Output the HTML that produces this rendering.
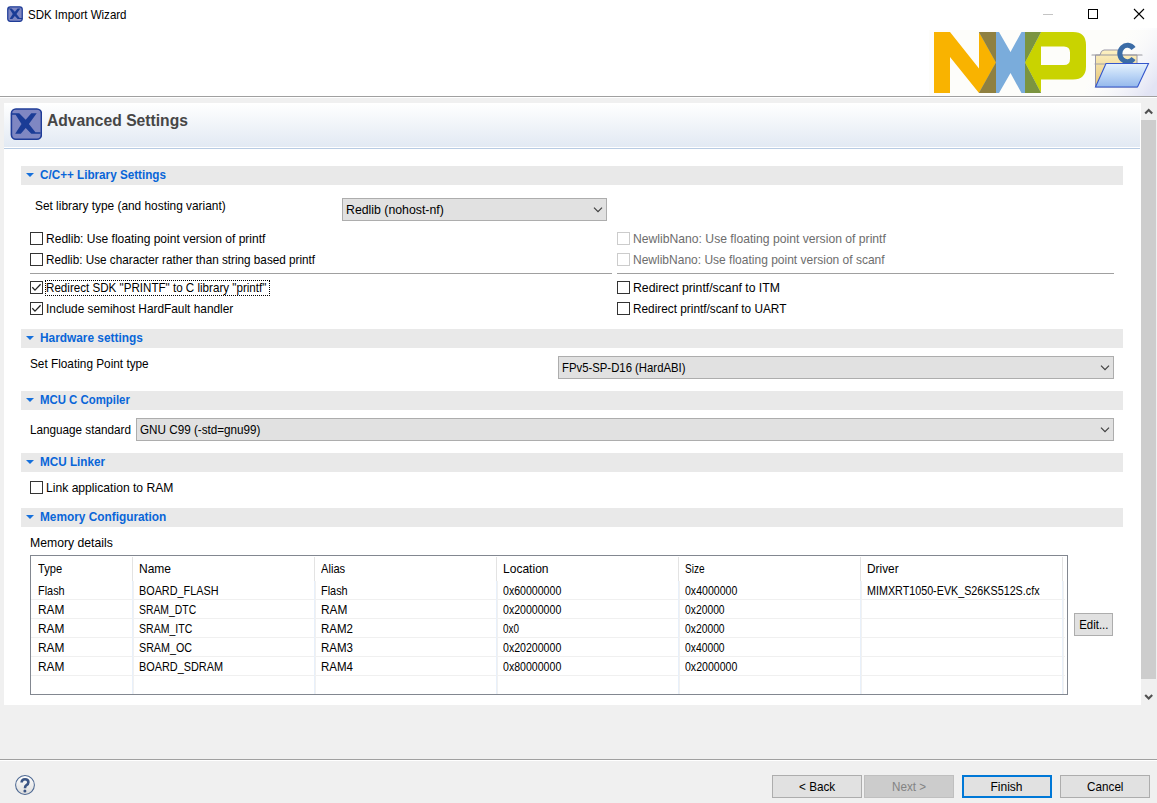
<!DOCTYPE html>
<html><head><meta charset="utf-8">
<style>
*{margin:0;padding:0;box-sizing:border-box}
html,body{width:1157px;height:803px;overflow:hidden;background:#f0f0f0;font-family:"Liberation Sans",sans-serif;font-size:12.4px;color:#000}
.a{position:absolute}
.t{position:absolute;white-space:nowrap;line-height:14px;height:14px}
.b{font-weight:bold}
.cb{position:absolute;width:13px;height:13px;border:1px solid #333;background:#fff}
.cb.dis{border-color:#cccccc}
.cb svg{position:absolute;left:0;top:0}
.dis-t{color:#6d6d6d}
.bar{position:absolute;left:21px;width:1102px;height:19px;background:#e9e9e9}
.bar .tri{position:absolute;left:5px;top:7px;width:0;height:0;border-left:4px solid transparent;border-right:4px solid transparent;border-top:4.4px solid #1570dc}
.bar .t{left:19px;color:#0865d8;font-weight:bold}
.combo{position:absolute;height:23px;border:1px solid #adadad;background:#e1e1e1}
.combo .t{left:3px;top:4px}
.combo svg{position:absolute;top:8px}
.sep{position:absolute;height:1px;background:#a0a0a0}
.btn{position:absolute;height:23px;border:1px solid #adadad;background:#e1e1e1;text-align:center;line-height:21px;padding-top:1px}
.bl{display:inline-block;transform-origin:50% 50%}
.vl{position:absolute;width:1px}
.hl{position:absolute;height:1px;background:#f0f0f0}
</style></head><body>
<!-- title bar & banner -->
<div class="a" style="left:0;top:0;width:1157px;height:96px;background:#fff"></div>
<svg class="a" style="left:7px;top:6px" width="16" height="16" viewBox="0 0 32 32">
<rect x="1.5" y="1.5" width="29" height="29" rx="5" fill="#7f87c2" stroke="#1f3c98" stroke-width="2.5"/>
<path d="M2,5.2 H9.2 L15.7,11.7 L21.3,5.2 H26.7 L18.9,15.9 L25.4,24.2 H30.5 V25.8 H21.3 L15.7,20 L10.8,25.8 H5.2 L11.5,15.9 L5.6,6.7 H2 Z" fill="#1a3c96"/>
</svg>
<div class="t" style="transform:scaleX(0.9292);transform-origin:0 0;left:28px;top:8px">SDK Import Wizard</div>
<!-- window controls -->
<div class="a" style="left:1043px;top:14px;width:10px;height:1px;background:#c4c4c4"></div>
<div class="a" style="left:1088px;top:9px;width:10px;height:10px;border:1px solid #000"></div>
<svg class="a" style="left:1133px;top:8px" width="12" height="12" viewBox="0 0 12 12"><path d="M1 1 L11 11 M11 1 L1 11" stroke="#000" stroke-width="1.1"/></svg>
<!-- NXP logo -->
<svg class="a" style="left:0;top:0" width="1157" height="96" viewBox="0 0 1157 96">
<rect x="929" y="30" width="228" height="66" fill="#fdfdfa"/>
<polygon points="934,32 950,32 979,68.5 979,32 996,32 996,93 979,93 950,57 950,93 934,93" fill="#f9b300"/>
<polygon points="979,32 999,32 1010.5,52 1021.5,32 1041,32 1025,62.5 1041,93 1021.5,93 1010.5,73 999,93 979,93 996,62.5" fill="#7aacdb"/>
<path d="M1041,32 H1073 Q1086,32 1086,45 V66.5 Q1086,79.5 1073,79.5 H1041 V93 L1025,62.5 Z M1041,46.5 V65 H1064 Q1070,65 1070,59 V52.5 Q1070,46.5 1064,46.5 Z" fill="#c9d300" fill-rule="evenodd"/>
<polygon points="979,32 996,32 996,93 979,93 996,62.5" fill="#8f8040"/>
<polygon points="1025,32 1041,32 1025,62.5 1041,93 1025,93" fill="#7b9440"/>
</svg>
<!-- folder icon -->
<svg class="a" style="left:1085px;top:28px" width="72" height="68" viewBox="0 0 72 68">
<defs>
<linearGradient id="bgl" x1="0" y1="0" x2="1" y2="0.8"><stop offset="0.35" stop-color="#ffffff" stop-opacity="0"/><stop offset="1" stop-color="#e2e4f4"/></linearGradient>
<linearGradient id="fb" x1="0" y1="0" x2="0" y2="1"><stop offset="0" stop-color="#fdf2c4"/><stop offset="1" stop-color="#e6c474"/></linearGradient>
<linearGradient id="ff" x1="0" y1="0" x2="0" y2="1"><stop offset="0" stop-color="#e6f2fd"/><stop offset="0.5" stop-color="#bcd6f6"/><stop offset="1" stop-color="#94b8ec"/></linearGradient>
</defs>
<rect x="0" y="0" width="72" height="68" fill="url(#bgl)"/>
<path d="M10.5,59 V27 H15 Q16,22 19,22 H33 V27 H52 V59 Z" fill="url(#fb)" stroke="#9a98a8" stroke-width="1"/>
<path d="M7,27 H57" stroke="#9a9aa0" stroke-width="1.2" stroke-linecap="round"/>
<path d="M48.5,20.5 A7.6,8.2 0 1 0 48.5,30.5" fill="none" stroke="#3b6ca6" stroke-width="5"/>
<path d="M10,36 H58" stroke="#a0a0a8" stroke-width="1" stroke-linecap="round"/>
<polygon points="21,35.5 63.5,35.5 52.5,59 10.5,59" fill="url(#ff)" stroke="#3456cc" stroke-width="1.1"/>
</svg>
<div class="sep" style="left:0;top:96px;width:1157px"></div><div class="a" style="left:0;top:97px;width:1157px;height:1px;background:#fff"></div>

<!-- content panel -->
<div class="a" style="left:4px;top:103px;width:1137px;height:602px;background:#fff"></div>
<div class="a" style="left:4px;top:103px;width:1136px;height:44px;background:linear-gradient(#ffffff,#e2e9f3)"></div>
<div class="a" style="left:4px;top:148px;width:1136px;height:1px;background:#b7cbe3"></div>
<svg class="a" style="left:10px;top:108px" width="32" height="32" viewBox="0 0 32 32">
<rect x="1.4" y="1" width="30" height="30.2" rx="4.5" fill="#7f87c2" stroke="#1f3c98" stroke-width="1.6"/>
<path d="M2,5.2 H9.2 L15.7,11.7 L21.3,5.2 H26.7 L18.9,15.9 L25.4,24.2 H30.5 V25.8 H21.3 L15.7,20 L10.8,25.8 H5.2 L11.5,15.9 L5.6,6.7 H2 Z" fill="#1a3c96"/>
</svg>
<div class="t b" style="transform:scaleX(0.985);transform-origin:0 0;left:47px;top:112px;font-size:15.9px;line-height:18px;height:18px;color:#464646">Advanced Settings</div>

<!-- scrollbar -->
<div class="a" style="left:1141px;top:103px;width:16px;height:602px;background:#f0f0f0"></div>
<div class="a" style="left:1141px;top:120px;width:15px;height:559px;background:#cdcdcd"></div>
<svg class="a" style="left:1141px;top:106px" width="16" height="12" viewBox="0 0 16 12"><path d="M4.2 7.5 L7.7 4 L11.2 7.5" fill="none" stroke="#505050" stroke-width="2.1"/></svg>
<svg class="a" style="left:1141px;top:692px" width="16" height="12" viewBox="0 0 16 12"><path d="M4.2 3 L7.7 6.5 L11.2 3" fill="none" stroke="#505050" stroke-width="2.1"/></svg>

<!-- C/C++ Library Settings -->
<div class="bar" style="top:166px"><div class="tri"></div><div class="t" style="transform:scaleX(0.9432);transform-origin:0 0;top:2px">C/C++ Library Settings</div></div>
<div class="t" style="transform:scaleX(0.9578);transform-origin:0 0;left:35px;top:199px">Set library type (and hosting variant)</div>
<div class="combo" style="left:342px;top:198px;width:265px"><div class="t" style="transform:scaleX(0.9928);transform-origin:0 0;">Redlib (nohost-nf)</div>
<svg style="left:250px" width="10" height="6" viewBox="0 0 10 6"><path d="M1 0.6 L5 4.6 L9 0.6" fill="none" stroke="#404040" stroke-width="1.2"/></svg></div>

<div class="cb" style="left:30px;top:232px"></div><div class="t" style="transform:scaleX(0.9711);transform-origin:0 0;left:46px;top:232px">Redlib: Use floating point version of printf</div>
<div class="cb" style="left:30px;top:253px"></div><div class="t" style="transform:scaleX(0.9461);transform-origin:0 0;left:46px;top:253px">Redlib: Use character rather than string based printf</div>
<div class="sep" style="left:30px;top:273px;width:582px"></div>
<div class="cb" style="left:30px;top:281px"><svg width="11" height="11" viewBox="0 0 11 11"><path d="M1.3 5.2 L4 8.1 L9.6 2.3" fill="none" stroke="#222" stroke-width="1.3"/></svg></div>
<div class="t" style="transform:scaleX(0.9370);transform-origin:0 0;left:46px;top:281px;">Redirect SDK "PRINTF" to C library "printf"</div>
<div class="a" style="left:45px;top:280px;width:225px;height:16px;border:1px dotted #000"></div>
<div class="cb" style="left:30px;top:302px"><svg width="11" height="11" viewBox="0 0 11 11"><path d="M1.3 5.2 L4 8.1 L9.6 2.3" fill="none" stroke="#222" stroke-width="1.3"/></svg></div>
<div class="t" style="transform:scaleX(0.9574);transform-origin:0 0;left:46px;top:302px;">Include semihost HardFault handler</div>

<div class="cb dis" style="left:617px;top:232px"></div><div class="t dis-t" style="transform:scaleX(0.9817);transform-origin:0 0;left:633px;top:232px">NewlibNano: Use floating point version of printf</div>
<div class="cb dis" style="left:617px;top:253px"></div><div class="t dis-t" style="transform:scaleX(0.9691);transform-origin:0 0;left:633px;top:253px">NewlibNano: Use floating point version of scanf</div>
<div class="sep" style="left:617px;top:273px;width:497px"></div>
<div class="cb" style="left:617px;top:281px"></div><div class="t" style="transform:scaleX(0.9878);transform-origin:0 0;left:633px;top:281px">Redirect printf/scanf to ITM</div>
<div class="cb" style="left:617px;top:302px"></div><div class="t" style="transform:scaleX(0.9531);transform-origin:0 0;left:633px;top:302px">Redirect printf/scanf to UART</div>

<!-- Hardware settings -->
<div class="bar" style="top:329px"><div class="tri"></div><div class="t" style="transform:scaleX(0.9575);transform-origin:0 0;top:2px">Hardware settings</div></div>
<div class="t" style="transform:scaleX(0.9520);transform-origin:0 0;left:30px;top:357px">Set Floating Point type</div>
<div class="combo" style="left:558px;top:356px;width:556px"><div class="t" style="transform:scaleX(0.9150);transform-origin:0 0;">FPv5-SP-D16 (HardABI)</div>
<svg style="left:541px" width="10" height="6" viewBox="0 0 10 6"><path d="M1 0.6 L5 4.6 L9 0.6" fill="none" stroke="#404040" stroke-width="1.2"/></svg></div>

<!-- MCU C Compiler -->
<div class="bar" style="top:391px"><div class="tri"></div><div class="t" style="transform:scaleX(0.9196);transform-origin:0 0;top:2px">MCU C Compiler</div></div>
<div class="t" style="transform:scaleX(0.9453);transform-origin:0 0;left:30px;top:423px">Language standard</div>
<div class="combo" style="left:136px;top:418px;width:978px"><div class="t" style="transform:scaleX(0.9433);transform-origin:0 0;">GNU C99 (-std=gnu99)</div>
<svg style="left:963px" width="10" height="6" viewBox="0 0 10 6"><path d="M1 0.6 L5 4.6 L9 0.6" fill="none" stroke="#404040" stroke-width="1.2"/></svg></div>

<!-- MCU Linker -->
<div class="bar" style="top:453px"><div class="tri"></div><div class="t" style="transform:scaleX(0.9456);transform-origin:0 0;top:2px">MCU Linker</div></div>
<div class="cb" style="left:30px;top:481px"></div><div class="t" style="transform:scaleX(0.9791);transform-origin:0 0;left:46px;top:481px">Link application to RAM</div>

<!-- Memory Configuration -->
<div class="bar" style="top:508px"><div class="tri"></div><div class="t" style="transform:scaleX(0.9557);transform-origin:0 0;top:2px">Memory Configuration</div></div>
<div class="t" style="transform:scaleX(0.9855);transform-origin:0 0;left:30px;top:536px">Memory details</div>

<div class="a" style="left:30px;top:555px;width:1038px;height:140px;border:1px solid #828790;background:#fff"></div>
<!-- row lines -->
<div class="hl" style="left:31px;top:599px;width:1034px"></div>
<div class="hl" style="left:31px;top:618px;width:1034px"></div>
<div class="hl" style="left:31px;top:637px;width:1034px"></div>
<div class="hl" style="left:31px;top:656px;width:1034px"></div>
<div class="hl" style="left:31px;top:675px;width:1034px"></div>
<!-- column lines -->
<div class="vl" style="left:132px;top:557px;height:24px;background:#e3e3e3"></div><div class="vl" style="left:132px;top:581px;height:113px;background:#e8f0fa"></div><div class="vl" style="left:133px;top:581px;height:113px;background:#f1f1f1"></div>
<div class="vl" style="left:314px;top:557px;height:24px;background:#e3e3e3"></div><div class="vl" style="left:314px;top:581px;height:113px;background:#e8f0fa"></div><div class="vl" style="left:315px;top:581px;height:113px;background:#f1f1f1"></div>
<div class="vl" style="left:496px;top:557px;height:24px;background:#e3e3e3"></div><div class="vl" style="left:496px;top:581px;height:113px;background:#e8f0fa"></div><div class="vl" style="left:497px;top:581px;height:113px;background:#f1f1f1"></div>
<div class="vl" style="left:678px;top:557px;height:24px;background:#e3e3e3"></div><div class="vl" style="left:678px;top:581px;height:113px;background:#e8f0fa"></div><div class="vl" style="left:679px;top:581px;height:113px;background:#f1f1f1"></div>
<div class="vl" style="left:860px;top:557px;height:24px;background:#e3e3e3"></div><div class="vl" style="left:860px;top:581px;height:113px;background:#e8f0fa"></div><div class="vl" style="left:861px;top:581px;height:113px;background:#f1f1f1"></div>
<div class="vl" style="left:1062px;top:557px;height:24px;background:#e3e3e3"></div><div class="vl" style="left:1062px;top:581px;height:113px;background:#e8f0fa"></div><div class="vl" style="left:1063px;top:581px;height:113px;background:#f1f1f1"></div>
<!-- header -->
<div class="t" style="transform:scaleX(0.8963);transform-origin:0 0;left:38px;top:562px">Type</div>
<div class="t" style="transform:scaleX(0.9688);transform-origin:0 0;left:139px;top:562px">Name</div>
<div class="t" style="transform:scaleX(0.9000);transform-origin:0 0;left:321px;top:562px">Alias</div>
<div class="t" style="transform:scaleX(0.9717);transform-origin:0 0;left:503px;top:562px">Location</div>
<div class="t" style="transform:scaleX(0.8125);transform-origin:0 0;left:685px;top:562px">Size</div>
<div class="t" style="transform:scaleX(0.9563);transform-origin:0 0;left:867px;top:562px">Driver</div>
<!-- rows -->
<div class="t" style="transform:scaleX(0.8793);transform-origin:0 0;left:38px;top:584px">Flash</div><div class="t" style="transform:scaleX(0.8742);transform-origin:0 0;left:139px;top:584px">BOARD_FLASH</div><div class="t" style="transform:scaleX(0.8793);transform-origin:0 0;left:321px;top:584px">Flash</div><div class="t" style="transform:scaleX(0.8544);transform-origin:0 0;left:503px;top:584px">0x60000000</div><div class="t" style="transform:scaleX(0.8525);transform-origin:0 0;left:685px;top:584px">0x4000000</div><div class="t" style="transform:scaleX(0.8677);transform-origin:0 0;left:867px;top:584px">MIMXRT1050-EVK_S26KS512S.cfx</div>
<div class="t" style="transform:scaleX(0.9577);transform-origin:0 0;left:38px;top:603px">RAM</div><div class="t" style="transform:scaleX(0.8382);transform-origin:0 0;left:139px;top:603px">SRAM_DTC</div><div class="t" style="transform:scaleX(0.9577);transform-origin:0 0;left:321px;top:603px">RAM</div><div class="t" style="transform:scaleX(0.8544);transform-origin:0 0;left:503px;top:603px">0x20000000</div><div class="t" style="transform:scaleX(0.8333);transform-origin:0 0;left:685px;top:603px">0x20000</div>
<div class="t" style="transform:scaleX(0.9577);transform-origin:0 0;left:38px;top:622px">RAM</div><div class="t" style="transform:scaleX(0.8500);transform-origin:0 0;left:139px;top:622px">SRAM_ITC</div><div class="t" style="transform:scaleX(0.9300);transform-origin:0 0;left:321px;top:622px">RAM2</div><div class="t" style="transform:scaleX(0.8000);transform-origin:0 0;left:503px;top:622px">0x0</div><div class="t" style="transform:scaleX(0.8333);transform-origin:0 0;left:685px;top:622px">0x20000</div>
<div class="t" style="transform:scaleX(0.9577);transform-origin:0 0;left:38px;top:641px">RAM</div><div class="t" style="transform:scaleX(0.8639);transform-origin:0 0;left:139px;top:641px">SRAM_OC</div><div class="t" style="transform:scaleX(0.9300);transform-origin:0 0;left:321px;top:641px">RAM3</div><div class="t" style="transform:scaleX(0.8544);transform-origin:0 0;left:503px;top:641px">0x20200000</div><div class="t" style="transform:scaleX(0.8333);transform-origin:0 0;left:685px;top:641px">0x40000</div>
<div class="t" style="transform:scaleX(0.9577);transform-origin:0 0;left:38px;top:660px">RAM</div><div class="t" style="transform:scaleX(0.8777);transform-origin:0 0;left:139px;top:660px">BOARD_SDRAM</div><div class="t" style="transform:scaleX(0.9300);transform-origin:0 0;left:321px;top:660px">RAM4</div><div class="t" style="transform:scaleX(0.8544);transform-origin:0 0;left:503px;top:660px">0x80000000</div><div class="t" style="transform:scaleX(0.8525);transform-origin:0 0;left:685px;top:660px">0x2000000</div>

<div class="btn" style="left:1074px;top:613px;width:39px"><span class="bl" style="transform:scaleX(0.92)">Edit...</span></div>

<!-- bottom -->
<div class="sep" style="left:0;top:759px;width:1157px"></div><div class="a" style="left:0;top:760px;width:1157px;height:1px;background:#fff"></div>
<svg class="a" style="left:15px;top:775px" width="20" height="20" viewBox="0 0 20 20">
<defs><linearGradient id="hg" x1="0" y1="0" x2="0" y2="1"><stop offset="0" stop-color="#ffffff"/><stop offset="1" stop-color="#dcdcdc"/></linearGradient></defs>
<circle cx="10" cy="10" r="9.4" fill="url(#hg)" stroke="#4d6892" stroke-width="1.05"/>
<path d="M6.6 7.6 Q6.6 4.3 10 4.3 Q13.4 4.3 13.4 7.2 Q13.4 9.1 11.2 10.4 Q10 11.1 10 13.2" fill="none" stroke="#3b5584" stroke-width="2.6"/>
<circle cx="9.9" cy="15.9" r="1.5" fill="#3b5584"/>
</svg>
<div class="btn" style="left:772px;top:775px;width:90px"><span class="bl" style="transform:scaleX(0.945)">&lt; Back</span></div>
<div class="btn" style="left:864px;top:775px;width:90px;background:#cccccc;border-color:#bfbfbf;color:#838383"><span class="bl" style="transform:scaleX(0.94)">Next &gt;</span></div>
<div class="btn" style="left:962px;top:775px;width:90px;border:2px solid #0078d7;line-height:19px;padding-top:1px"><span class="bl" style="transform:scaleX(0.97)">Finish</span></div>
<div class="btn" style="left:1060px;top:775px;width:90px"><span class="bl" style="transform:scaleX(0.943)">Cancel</span></div>
</body></html>
